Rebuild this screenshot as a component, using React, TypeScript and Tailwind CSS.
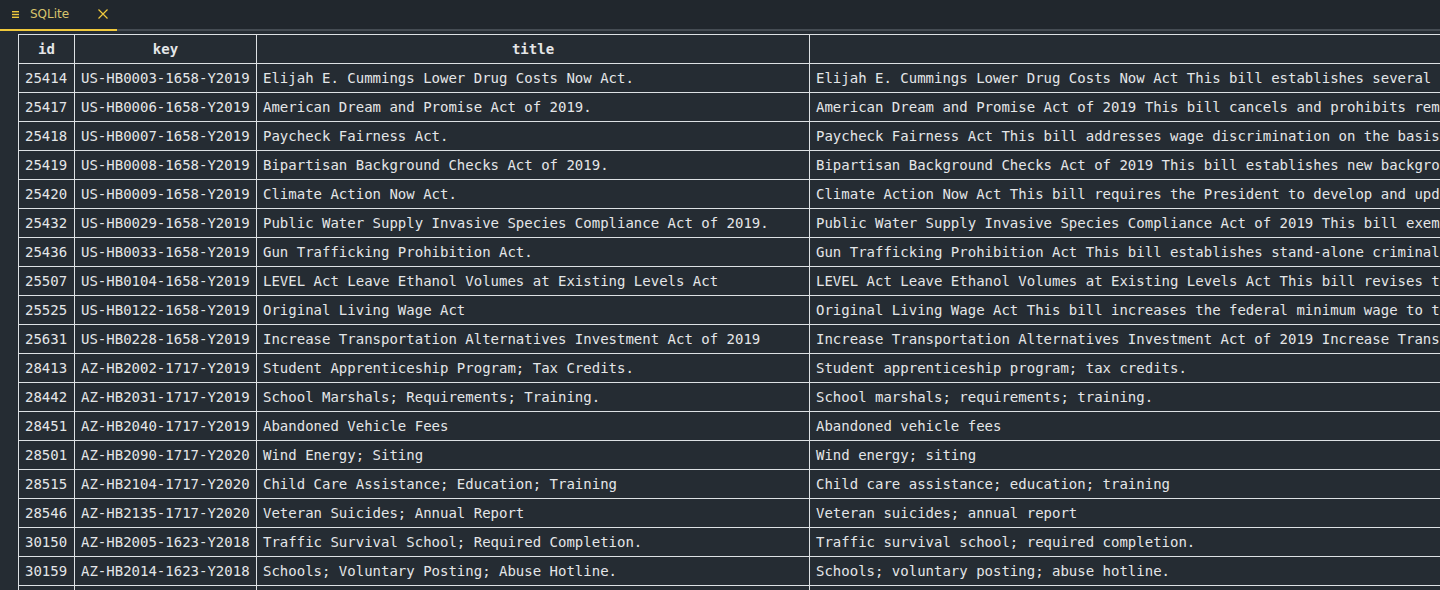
const rows: [string, string, string, string][] = [
  ["25414", "US-HB0003-1658-Y2019", "Elijah E. Cummings Lower Drug Costs Now Act.", "Elijah E. Cummings Lower Drug Costs Now Act This bill establishes several programs"],
  ["25417", "US-HB0006-1658-Y2019", "American Dream and Promise Act of 2019.", "American Dream and Promise Act of 2019 This bill cancels and prohibits removal"],
  ["25418", "US-HB0007-1658-Y2019", "Paycheck Fairness Act.", "Paycheck Fairness Act This bill addresses wage discrimination on the basis of sex"],
  ["25419", "US-HB0008-1658-Y2019", "Bipartisan Background Checks Act of 2019.", "Bipartisan Background Checks Act of 2019 This bill establishes new background"],
  ["25420", "US-HB0009-1658-Y2019", "Climate Action Now Act.", "Climate Action Now Act This bill requires the President to develop and update"],
  ["25432", "US-HB0029-1658-Y2019", "Public Water Supply Invasive Species Compliance Act of 2019.", "Public Water Supply Invasive Species Compliance Act of 2019 This bill exempts"],
  ["25436", "US-HB0033-1658-Y2019", "Gun Trafficking Prohibition Act.", "Gun Trafficking Prohibition Act This bill establishes stand-alone criminal offenses"],
  ["25507", "US-HB0104-1658-Y2019", "LEVEL Act Leave Ethanol Volumes at Existing Levels Act", "LEVEL Act Leave Ethanol Volumes at Existing Levels Act This bill revises the"],
  ["25525", "US-HB0122-1658-Y2019", "Original Living Wage Act", "Original Living Wage Act This bill increases the federal minimum wage to the"],
  ["25631", "US-HB0228-1658-Y2019", "Increase Transportation Alternatives Investment Act of 2019", "Increase Transportation Alternatives Investment Act of 2019 Increase Transportation"],
  ["28413", "AZ-HB2002-1717-Y2019", "Student Apprenticeship Program; Tax Credits.", "Student apprenticeship program; tax credits."],
  ["28442", "AZ-HB2031-1717-Y2019", "School Marshals; Requirements; Training.", "School marshals; requirements; training."],
  ["28451", "AZ-HB2040-1717-Y2019", "Abandoned Vehicle Fees", "Abandoned vehicle fees"],
  ["28501", "AZ-HB2090-1717-Y2020", "Wind Energy; Siting", "Wind energy; siting"],
  ["28515", "AZ-HB2104-1717-Y2020", "Child Care Assistance; Education; Training", "Child care assistance; education; training"],
  ["28546", "AZ-HB2135-1717-Y2020", "Veteran Suicides; Annual Report", "Veteran suicides; annual report"],
  ["30150", "AZ-HB2005-1623-Y2018", "Traffic Survival School; Required Completion.", "Traffic survival school; required completion."],
  ["30159", "AZ-HB2014-1623-Y2018", "Schools; Voluntary Posting; Abuse Hotline.", "Schools; voluntary posting; abuse hotline."],
  ["30160", "AZ-HB2015-1623-Y2018", "Schools; Emergency Procedures.", "Schools; emergency procedures."],
];

const cell = "h-[29px] overflow-hidden border border-[#dde1e4] px-[6px] py-0 align-middle whitespace-nowrap";

export default function App() {
  return (
    <div className="h-[590px] w-[1440px] overflow-hidden bg-[#252c33] text-[#e4e6e8]">
      {/* tab bar */}
      <div className="flex h-[31px] bg-[#21272d]">
        <div className="flex w-[117px] items-center border-b-2 border-[#f0c93c] pb-[1px]">
          <svg width="7" height="7" viewBox="0 0 7 7" className="ml-[12px]">
            <rect x="0" y="0" width="7" height="1.4" fill="#f0c93c" />
            <rect x="0" y="2.8" width="7" height="1.4" fill="#f0c93c" />
            <rect x="0" y="5.6" width="7" height="1.4" fill="#f0c93c" />
          </svg>
          <span
            className="ml-[11px] text-[12px] text-[#d8c46c]"
            style={{ fontFamily: "'DejaVu Sans', sans-serif" }}
          >
            SQLite
          </span>
          <svg width="10" height="10" viewBox="0 0 10 10" className="ml-[29px]">
            <path d="M0.5 0.5L9.5 9.5M9.5 0.5L0.5 9.5" stroke="#f0c93c" strokeWidth="1.2" />
          </svg>
        </div>
        <div className="flex-1 border-b-2 border-[#454c53]" />
      </div>

      <div className="pl-[18px] pt-[3px]">
        <table
          className="w-[1421px] table-fixed border-collapse text-[14px] leading-[17px]"
          style={{ fontFamily: "'DejaVu Sans Mono', monospace" }}
        >
          <colgroup>
            <col className="w-[56px]" />
            <col className="w-[182px]" />
            <col className="w-[553px]" />
            <col className="w-[630px]" />
          </colgroup>
          <thead>
            <tr>
              <th className={`${cell} text-center font-bold`}>id</th>
              <th className={`${cell} text-center font-bold`}>key</th>
              <th className={`${cell} text-center font-bold`}>title</th>
              <th className={`${cell} border-r-0 text-center font-bold`}></th>
            </tr>
          </thead>
          <tbody>
            {rows.map((r) => (
              <tr key={r[0]}>
                <td className={cell}>{r[0]}</td>
                <td className={cell}>{r[1]}</td>
                <td className={cell}>{r[2]}</td>
                <td className={`${cell} border-r-0 text-clip`}>{r[3]}</td>
              </tr>
            ))}
          </tbody>
        </table>
      </div>
    </div>
  );
}
